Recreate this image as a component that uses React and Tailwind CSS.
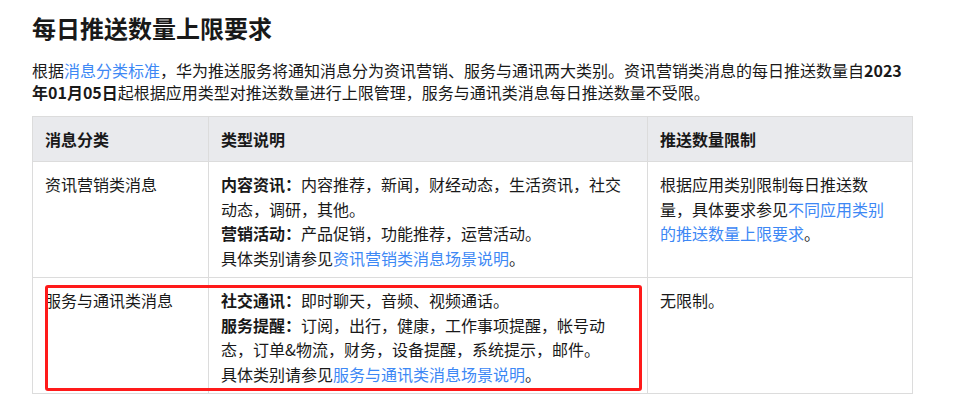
export default function App() {
  const link = "text-[#3d88f5]";
  return (
    <div
      className="relative w-[976px] h-[415px] bg-white pl-[32px] pt-[12px] text-[#191919]"
      style={{ fontFamily: '"Noto Sans CJK SC", "Noto Sans", sans-serif' }}
    >
      <h1 className="text-[24px] leading-[32px] font-bold">每日推送数量上限要求</h1>
      <p className="mt-[15px] w-[880px] text-[16px] leading-[22px]">
        根据<span className={link}>消息分类标准</span>，华为推送服务将通知消息分为资讯营销、服务与通讯两大类别。资讯营销类消息的每日推送数量自<b>2023年01月05日</b>起根据应用类型对推送数量进行上限管理，服务与通讯类消息每日推送数量不受限。
      </p>
      <table className="mt-[13px] w-[880px] table-fixed border-collapse text-[16px]">
        <colgroup>
          <col className="w-[176px]" />
          <col className="w-[439px]" />
          <col className="w-[265px]" />
        </colgroup>
        <thead>
          <tr className="bg-[#e9eaed]">
            <th className="border border-[#dcdcdc] px-[12px] py-[10px] text-left font-bold leading-[24px]">消息分类</th>
            <th className="border border-[#dcdcdc] px-[12px] py-[10px] text-left font-bold leading-[24px]">类型说明</th>
            <th className="border border-[#dcdcdc] pl-[12px] pr-[14px] py-[10px] text-left font-bold leading-[24px]">推送数量限制</th>
          </tr>
        </thead>
        <tbody className="leading-[24.5px] align-top">
          <tr>
            <td className="border border-[#dcdcdc] px-[12px] pt-[10px] pb-[7px]">资讯营销类消息</td>
            <td className="border border-[#dcdcdc] px-[12px] pt-[10px] pb-[7px]">
              <div><b>内容资讯：</b>内容推荐，新闻，财经动态，生活资讯，社交动态，调研，其他。</div>
              <div><b>营销活动：</b>产品促销，功能推荐，运营活动。</div>
              <div>具体类别请参见<span className={link}>资讯营销类消息场景说明</span>。</div>
            </td>
            <td className="border border-[#dcdcdc] pl-[12px] pr-[14px] pt-[10px] pb-[7px]">
              根据应用类别限制每日推送数量，具体要求参见<span className={link}>不同应用类别的推送数量上限要求</span>。
            </td>
          </tr>
          <tr>
            <td className="border border-[#dcdcdc] px-[12px] pt-[10px] pb-[7px]">服务与通讯类消息</td>
            <td className="border border-[#dcdcdc] px-[12px] pt-[10px] pb-[7px]">
              <div><b>社交通讯：</b>即时聊天，音频、视频通话。</div>
              <div><b>服务提醒：</b>订阅，出行，健康，工作事项提醒，帐号动态，订单&amp;物流，财务，设备提醒，系统提示，邮件。</div>
              <div>具体类别请参见<span className={link}>服务与通讯类消息场景说明</span>。</div>
            </td>
            <td className="border border-[#dcdcdc] pl-[12px] pr-[14px] pt-[10px] pb-[7px]">无限制。</td>
          </tr>
        </tbody>
      </table>
      <div className="absolute left-[45px] top-[285px] w-[597px] h-[106px] border-[3px] border-[#ff1a1a] rounded-[3px] pointer-events-none" />
    </div>
  );
}
